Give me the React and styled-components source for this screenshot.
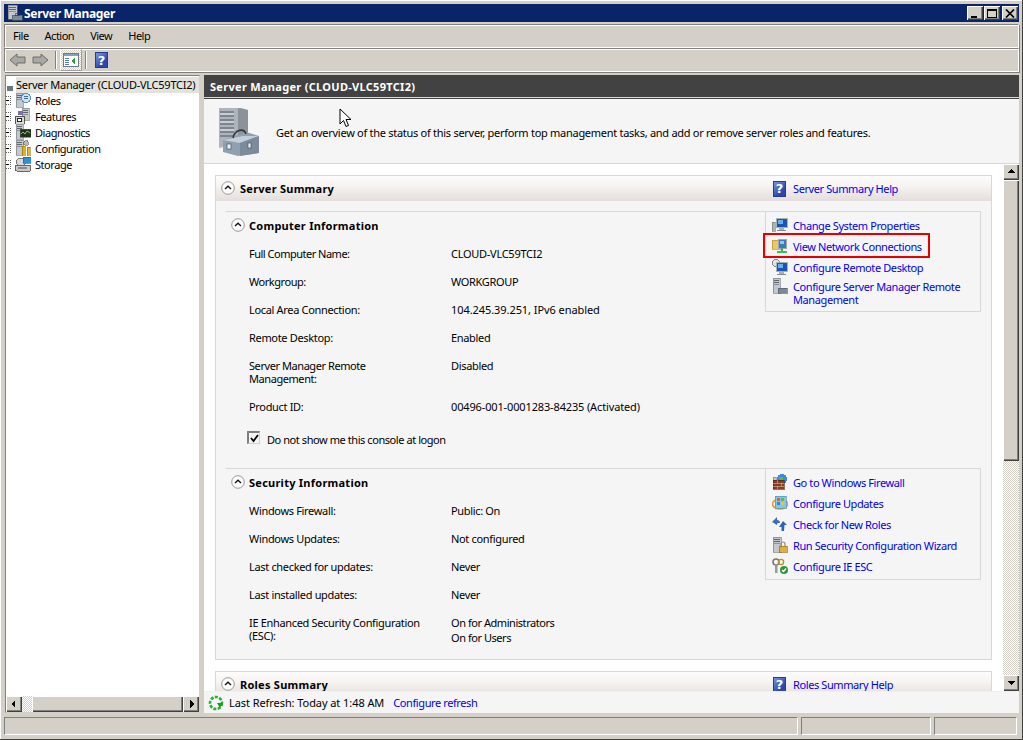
import React from 'react';
import styled, { createGlobalStyle } from 'styled-components';

const Global = createGlobalStyle`
  html, body { margin: 0; padding: 0; background: #d4d0c8; }
  body { font-family: "Noto Sans", "DejaVu Sans", sans-serif; font-size: 11px; line-height: 13px; color: #000; overflow: hidden; letter-spacing: -0.33px; }
  * { box-sizing: border-box; }
`;

const dither = `repeating-conic-gradient(#d4d0c8 0 25%, #fff 0 50%) 0 0 / 2px 2px`;
const raised = `box-shadow: inset 1px 1px 0 #fff, inset -1px -1px 0 #404040, inset -2px -2px 0 #808080;`;

const Window = styled.div`
  position: relative; width: 1023px; height: 740px; padding: 4px 4px 5px; background: #d4d0c8;
  box-shadow: inset -1px -1px 0 #404040, inset 1px 1px 0 #fff; display: flex; flex-direction: column;
`;
const TitleBar = styled.div`
  height: 18px; flex: none; background: #0a246a; display: flex; align-items: center; padding: 0 1px 0 3px; color: #fff;
`;
const TitleText = styled.span`font-weight: 700; font-size: 12px; margin-left: 1px; flex: 1; letter-spacing: -0.3px;`;
const WinButtons = styled.div`display: flex; gap: 1px; align-items: center;`;
const WinButton = styled.div`
  width: 16px; height: 14px; background: #d4d0c8; ${raised} display: flex; align-items: center; justify-content: center;
  margin-left: ${p => p.$gap || 0}px;
`;
const Bar = styled.div`
  height: 24px; flex: none; border: 1px solid #808080; border-right-color: #fff; border-bottom-color: #fff;
  box-shadow: inset 1px 1px 0 #fff, 1px 1px 0 #808080;
  display: flex; align-items: center;
`;
const MenuBar = styled(Bar)`margin-top: 2px; padding: 0 0 2px 8px; gap: 16px;`;
const MenuItem = styled.span`font-size: 11px; letter-spacing: -0.5px;`;
const ToolBar = styled(Bar)`padding-left: 4px;`;
const ToolSep = styled.div`width: 2px; height: 18px; border-left: 1px solid #808080; border-right: 1px solid #fff; margin: 0 ${p => p.$r || 4}px 0 ${p => p.$l || 4}px;`;
const ToolToggle = styled.div`
  width: 22px; height: 22px; background: ${dither}; border: 1px solid #fff; border-right-color: #a0a0a0; border-bottom-color: #a0a0a0;
  display: flex; align-items: center; justify-content: center;
`;
const Main = styled.div`flex: 1; min-height: 0; display: flex; margin-top: 3px; padding-left: 1px;`;
const TreePane = styled.div`
  width: 195px; flex: none; background: #fff; border: 1px solid #808080; border-bottom-color: #d4d0c8; border-right-color: #d4d0c8;
  display: flex; flex-direction: column; padding-top: 1px;
`;
const TreeList = styled.div`flex: 1; min-height: 0;`;
const TreeRootRow = styled.div`display: flex; align-items: center; height: 16px; position: relative;`;
const TreeRootLabel = styled.span`
  margin-left: 10px; background: #e4e2dc; height: 16px; padding-bottom: 2px; flex: 1; white-space: nowrap; display: flex; align-items: center; letter-spacing: -0.25px;
`;
const TreeRootIcon = styled.svg`position: absolute; left: 1px; top: 6px;`;
const TreeRow = styled.div`display: flex; align-items: center; height: 16px; padding-bottom: 2px; white-space: nowrap; letter-spacing: -0.45px;`;
const Expander = styled.div`width: 5px; height: 9px; border: 1px dotted #606060; border-left: none; margin-right: 4px; flex: none; background: linear-gradient(#000,#000) 0 3px / 3px 1px no-repeat;`;
const TreeIconSlot = styled.div`width: 16px; height: 16px; margin-right: 4px; flex: none;`;
const HScroll = styled.div`height: 16px; flex: none; display: flex; background: ${dither};`;
const ScrollBtn = styled.div`width: 16px; height: 16px; flex: none; background: #d4d0c8; ${raised} display: flex; align-items: center; justify-content: center;`;
const HThumb = styled.div`margin-left: 10px; flex: 1; background: #d4d0c8; ${raised}`;
const Splitter = styled.div`width: 4px; flex: none;`;
const RightPane = styled.div`flex: 1; min-width: 0; display: flex; flex-direction: column; background: #fff; box-shadow: inset 1px 0 0 #808080;`;
const PaneHeader = styled.div`
  height: 23px; flex: none; background: #424242; color: #fff; font-weight: 700; display: flex; align-items: center; padding-left: 6px;
  border-bottom: 1px solid #d8d8d8; font-size: 11px; letter-spacing: 0.3px;
`;
const Intro = styled.div`
  height: 66px; flex: none; background: #f5f5f5; border-top: 1px solid #424242; border-bottom: 1px solid #d8d8d8;
  display: flex; align-items: center; padding-left: 14px;
`;
const IntroText = styled.span`margin-left: 16px; padding-top: 2px; letter-spacing: -0.28px;`;
const ScrollZone = styled.div`flex: 1; min-height: 0; display: flex;`;
const Content = styled.div`flex: 1; min-width: 0; overflow: hidden; padding: 11px 11px 0; background: #fff;`;
const VScroll = styled.div`width: 16px; flex: none; display: flex; flex-direction: column; background: ${dither};`;
const VThumb = styled.div`height: 281px; flex: none; background: #d4d0c8; ${raised}`;
const VFill = styled.div`flex: 1;`;
const Section = styled.section`border: 1px solid #d8d8d8; background: #f5f5f5; margin-bottom: 11px;`;
const SectionHeader = styled.div`
  height: 25px; display: flex; align-items: center; padding-left: 5px;
  background: linear-gradient(#fdfcfc, #f6f3f1 40%, #e3dedb);
  > svg { margin-top: -2px; }
`;
const SectionTitle = styled.h2`margin: 0 0 0 ${p => p.$ml || 4}px; font-size: 11px; line-height: 13px; font-weight: 700; flex: 1; letter-spacing: 0.25px;`;
const HelpLink = styled.div`width: 218px; flex: none; display: flex; align-items: center;`;
const Link = styled.a`color: #0000ee; white-space: nowrap; margin-left: ${p => p.$ml || 0}px; letter-spacing: -0.4px;`;
const SectionBody = styled.div`padding: 10px 10px 9px;`;
const Group = styled.div`display: grid; grid-template-columns: 1fr 216px; align-items: start;`;
const InfoCol = styled.div`border-top: 1px solid #d8d8d8; height: ${p => p.$h}px;`;
const GroupHeader = styled.div`height: 26px; margin-bottom: 9px; display: flex; align-items: center; padding-left: 5px;`;
const InfoRow = styled.div`display: grid; grid-template-columns: 202px 1fr; padding: 0 0 15px 23px;`;
const InfoKey = styled.div`letter-spacing: ${p => p.$ls ?? -0.33}px;`;
const InfoValue = styled.div`letter-spacing: ${p => p.$ls ?? -0.33}px;`;
const CheckRow = styled.label`display: flex; align-items: center; padding: 5px 0 0 21px; letter-spacing: -0.43px;`;
const CheckBox = styled.span`
  width: 13px; height: 13px; flex: none; background: #f5f5f5; border: 2px solid #808080; border-right: 1px solid #d4d0c8; border-bottom: 1px solid #d4d0c8;
  display: flex; align-items: center; justify-content: center; margin-right: 7px; position: relative; top: -2px;
`;
const TaskBox = styled.div`border: 1px solid #d8d8d8; padding: 3px 0 2px;`;
const TaskRow = styled.div`
  display: flex; align-items: flex-start; padding: ${p => (p.$tight ? '2px 0 3px 6px' : '4px 0 4px 6px')}; position: relative;
`;
const TaskIcon = styled.div`width: 16px; height: 13px; flex: none; margin: -2px 5px 0 0;`;
const TaskLink = styled.a`color: #0000ee; line-height: 13px; width: 185px; letter-spacing: -0.4px;`;
const Highlight = styled.div`position: absolute; left: -3px; top: -3px; width: 167px; height: 25px; border: 2px solid #e80000; pointer-events: none;`;
const RefreshBar = styled.div`height: 22px; flex: none; background: #f5f5f5; display: flex; align-items: center; padding-left: 4px; border-top: 1px solid #f0f0f0; position: relative;`;
const RefreshText = styled.span`margin-left: 5px; letter-spacing: -0.07px;`;
const StatusBar = styled.div`height: 18px; flex: none; margin-top: 4px; display: flex; gap: 3px; padding-right: 2px;`;
const StatusCell = styled.div`
  flex: ${p => (p.$w ? `0 0 ${p.$w}px` : 1)}; border: 1px solid #808080; border-right-color: #fff; border-bottom-color: #fff;
`;
const Cursor = styled.svg`position: absolute; left: 339px; top: 108px; pointer-events: none;`;
const TwoLine = styled.span`display: inline-block; margin-top: 2px;`;
const HelpBox = styled.span`
  width: 13px; height: 16px; flex: none; display: flex; align-items: center; justify-content: center;
  background: linear-gradient(135deg, #7a96dc, #2a48b0 70%); border: 1px solid #27399a; color: #fff; font: 700 13px/13px "DejaVu Sans", sans-serif; letter-spacing: 0;
`;
const ToolPane = styled.div`margin-right: ${p => p.$r || 0}px;`;

const Sv = ({ children, s = 16, v = 16 }) => (
  <svg width={s} height={s} viewBox={`0 0 ${v} ${v}`} shapeRendering="crispEdges" style={{ display: 'block' }}>{children}</svg>
);

const Tower = ({ x = 1, y = 0, w = 7, h = 14, c = '#c4c8cc' }) => (
  <g>
    <rect x={x} y={y} width={w} height={h} fill={c} stroke="#70757a" strokeWidth="0.6" />
    <rect x={x + 1} y={y + 2} width={w - 2} height="1" fill="#60666c" />
    <rect x={x + 1} y={y + 4} width={w - 2} height="1" fill="#60666c" />
    <rect x={x + 1} y={y + 6} width={w - 2} height="1" fill="#8a9096" />
  </g>
);

const ServerCase = () => (
  <Sv><Tower x={1} y={0} w={9} h={14} /><rect x={5} y={10} width={10} height={5} fill="#7c8a98" stroke="#4a5560" strokeWidth="0.6" /><rect x={8} y={8.5} width={4} height={1.5} fill="none" stroke="#333" strokeWidth="0.6" /></Sv>
);
const RolesIcon = () => (
  <Sv><Tower x={1} y={1} w={7} h={14} /><ellipse cx={11} cy={6} rx={4.5} ry={4.5} fill="#cfe4f7" stroke="#5b8fc8" /><rect x={9} y={4} width={4} height={1} fill="#3a6ea8" /><rect x={9} y={6} width={4} height={1} fill="#3a6ea8" /></Sv>
);
const FeaturesIcon = () => (
  <Sv><Tower x={7} y={0} w={7} h={12} /><rect x={3} y={3} width={5} height={4} fill="#7d6fb0" /><rect x={0} y={8} width={9} height={8} fill="#d8d8d0" stroke="#333" strokeWidth="0.8" /><circle cx={4.5} cy={12} r={2} fill="#fff" stroke="#222" /></Sv>
);
const DiagIcon = () => (
  <Sv><Tower x={1} y={0} w={7} h={15} /><rect x={5} y={5} width={11} height={8} fill="#26301f" stroke="#555" strokeWidth="0.6" /><path d="M6 10 L8 8 L10 10 L12 7 L15 9" fill="none" stroke="#7ed048" strokeWidth="1" shapeRendering="auto" /></Sv>
);
const ConfigIcon = () => (
  <Sv><Tower x={1} y={0} w={7} h={15} /><circle cx={11} cy={3} r={2.5} fill="#b8b8b8" stroke="#555" strokeWidth="0.6" /><rect x={7} y={6} width={3} height={10} fill="#e0b020" stroke="#7a5a08" strokeWidth="0.5" /><rect x={12} y={7} width={3} height={9} fill="#e8b818" stroke="#7a5a08" strokeWidth="0.5" /></Sv>
);
const StorageIcon = () => (
  <Sv><ellipse cx={6} cy={6} rx={5} ry={4} fill="#d8d8d8" stroke="#777" /><rect x={8} y={1} width={8} height={6} fill="#2b8fd8" stroke="#1c5a90" strokeWidth="0.6" /><rect x={0.5} y={9} width={15} height={6} rx={1} fill="#c8c8c8" stroke="#666" /><rect x={3} y={11} width={9} height={2} fill="#8c8c8c" /></Sv>
);
const Monitor = ({ x = 4, y = 1 }) => (
  <g><rect x={x} y={y} width={11} height={9} fill="#1b55b0" stroke="#a8b0b8" /><rect x={x + 2} y={y + 2} width={5} height={4} fill="#66b0ee" /><rect x={x + 3} y={y + 10} width={5} height={2} fill="#aab0b8" /><rect x={x + 1} y={y + 12} width={9} height={1} fill="#808890" /></g>
);
const SysIcon = () => <Sv><rect x={0} y={5} width={3} height={9} fill="#b0b4b0" stroke="#666" strokeWidth="0.5" /><Monitor x={4} y={1} /></Sv>;
const NetIcon = () => (
  <Sv><rect x={0} y={2} width={10} height={9} fill="#ecc860" stroke="#b08a28" strokeWidth="0.6" /><rect x={6} y={1} width={8} height={9} fill="#3f78c0" stroke="#a0a8b0" /><rect x={8} y={3} width={4} height={3} fill="#90c8f0" /><rect x={9} y={10} width={2} height={3} fill="#40b050" /><rect x={5} y={13} width={10} height={2} fill="#40c060" /></Sv>
);
const RemoteIcon = () => <Sv><circle cx={4} cy={4} r={3.5} fill="#dfe4e8" stroke="#888" /><Monitor x={4} y={3} /></Sv>;
const FirewallIcon = () => (
  <Sv><circle cx={10} cy={5} r={5} fill="#3a8cdc" /><path d="M7 3h4v3H8z" fill="#58b848" /><rect x={1} y={3} width={3} height={3} fill="#c8c8c8" stroke="#666" strokeWidth="0.5" /><rect x={1} y={6} width={11} height={9} fill="#8a3b22" stroke="#4a1c10" strokeWidth="0.6" /><path d="M1 9h11M1 12h11M5 6v3M9 9v3M5 12v3" stroke="#e0b8a0" strokeWidth="0.6" /></Sv>
);
const UpdatesIcon = () => (
  <Sv><ellipse cx={8} cy={9} rx={7.5} ry={5} fill="none" stroke="#f09828" strokeWidth="1.6" shapeRendering="auto" /><rect x={3} y={1} width={11} height={12} fill="#80c8e8" stroke="#3a90c8" strokeWidth="0.6" /><rect x={5} y={3} width={3} height={3} fill="#e86030" /><rect x={9} y={3} width={3} height={3} fill="#60b848" /><rect x={5} y={7} width={3} height={3} fill="#3a80d8" /><rect x={9} y={7} width={3} height={3} fill="#f0c030" /></Sv>
);
const RolesCheckIcon = () => (
  <svg width="16" height="16" viewBox="0 0 16 16" style={{ display: 'block' }}>
    <path d="M0 6 L5 1 L5 4 C7 4 8 5 8 7 L5.5 7 L5 9 Z" fill="#3a6ec0" />
    <path d="M7 11 L11 5 L15 9 L12.5 9 L12 15 L9.5 15 L9.5 11 Z" fill="#2c64b4" />
  </svg>
);
const SecWizardIcon = () => (
  <Sv><Tower x={1} y={0} w={8} h={15} /><rect x={7} y={9} width={8} height={6} fill="#e0b040" stroke="#8a6410" strokeWidth="0.6" /><path d="M9 9V7a2 2 0 0 1 4 0v2" fill="none" stroke="#888" strokeWidth="1.2" shapeRendering="auto" /></Sv>
);
const EscIcon = () => (
  <svg width="16" height="16" viewBox="0 0 16 16" style={{ display: 'block' }}>
    <circle cx="4" cy="4" r="3" fill="none" stroke="#777" strokeWidth="1.6" />
    <rect x="3" y="6" width="2.5" height="9" fill="#999" />
    <circle cx="9" cy="4" r="2.6" fill="none" stroke="#b89020" strokeWidth="1.3" />
    <circle cx="12" cy="12" r="4" fill="#2c9a3c" />
    <path d="M10 12 L11.5 13.5 L14 10.5" fill="none" stroke="#fff" strokeWidth="1.2" />
  </svg>
);
const ToolCase = () => (
  <svg width="16" height="16" viewBox="0 0 16 16" shapeRendering="crispEdges" style={{ display: 'block' }}>
    <Tower x={1} y={0} w={7} h={15} /><rect x={6} y={10} width={9} height={5} fill="#7c8a98" stroke="#4a5560" strokeWidth="0.6" />
  </svg>
);
const BigServer = () => (
  <svg width="42" height="50" viewBox="0 0 42 50" style={{ display: 'block' }}>
    <path d="M1 2 L24 2 L30 4 L30 36 L1 42 Z" fill="#aeb4bc" />
    <path d="M20 2 L30 4 L30 36 L20 38 Z" fill="#8b929a" />
    <path d="M2 6h14M2 10h14M2 14h14M2 18h14M2 22h14M2 26h14M2 30h14" stroke="#6f757c" strokeWidth="1.3" />
    <path d="M2 8h14M2 16h14M2 24h14" stroke="#e4e7ea" strokeWidth="1" />
    <path d="M5 34 L28 26 L41 30 L41 47 L20 50 L5 46 Z" fill="#8fa0b0" />
    <path d="M5 34 L25 30 L41 30 L22 37 Z" fill="#c3ced8" />
    <path d="M22 37 L41 30 L41 47 L22 50 Z" fill="#7b8b9c" />
    <path d="M15 32 C17 23 26 22 28 28" fill="none" stroke="#33383e" strokeWidth="1.6" />
    <rect x="9" y="38" width="4" height="5" fill="#e8edf2" stroke="#3e464e" strokeWidth="0.6" />
    <rect x="30" y="37" width="3" height="5" fill="#e8edf2" stroke="#3e464e" strokeWidth="0.6" />
  </svg>
);

const Collapse = () => (
  <svg width="14" height="14" viewBox="0 0 14 14" style={{ display: 'block', flex: 'none' }}>
    <circle cx="7" cy="7" r="6.3" fill="#fbfbfb" stroke="#8e8e8e" strokeWidth="0.9" />
    <path d="M4 8 L7 5.2 L10 8" fill="none" stroke="#111" strokeWidth="1.3" />
  </svg>
);
const HelpIcon = () => <HelpBox>?</HelpBox>;
const Arrow = ({ d }) => {
  const pts = { u: '4,9 8,5 12,9', d: '4,6 12,6 8,10', l: '9,4 9,12 5,8', r: '7,4 7,12 11,8' }[d];
  return <svg width="16" height="16" viewBox="0 0 16 16" style={{ display: 'block' }} shapeRendering="crispEdges"><polygon points={pts} fill="#000" /></svg>;
};
const ToolArrow = ({ flip }) => (
  <svg width="17" height="16" viewBox="0 0 17 16" style={{ display: 'block', transform: flip ? 'scaleX(-1)' : 'none' }}>
    <path d="M1 8 L8 2 L8 5 L16 5 L16 11 L8 11 L8 14 Z" fill="#a8a8a4" stroke="#6c6c68" strokeWidth="1" />
  </svg>
);

const tree = [
  ['Roles', RolesIcon], ['Features', FeaturesIcon], ['Diagnostics', DiagIcon], ['Configuration', ConfigIcon], ['Storage', StorageIcon],
];
const compInfo = [
  ['Full Computer Name:', 'CLOUD-VLC59TCI2', -0.27, -0.5],
  ['Workgroup:', 'WORKGROUP', -0.33, -0.45],
  ['Local Area Connection:', '104.245.39.251, IPv6 enabled', -0.07],
  ['Remote Desktop:', 'Enabled'],
  [<>Server Manager Remote<br />Management:</>, 'Disabled', -0.33, -0.43],
  ['Product ID:', '00496-001-0001283-84235 (Activated)', -0.14],
];
const secInfo = [
  ['Windows Firewall:', 'Public: On'],
  ['Windows Updates:', 'Not configured'],
  ['Last checked for updates:', 'Never'],
  ['Last installed updates:', 'Never'],
  [<>IE Enhanced Security Configuration<br />(ESC):</>, <>On for Administrators<br /><TwoLine>On for Users</TwoLine></>, -0.45],
];
const compTasks = [
  ['Change System Properties', SysIcon],
  ['View Network Connections', NetIcon, true],
  ['Configure Remote Desktop', RemoteIcon],
  ['Configure Server Manager Remote Management', ToolCase, false, true],
];
const secTasks = [
  ['Go to Windows Firewall', FirewallIcon],
  ['Configure Updates', UpdatesIcon],
  ['Check for New Roles', RolesCheckIcon],
  ['Run Security Configuration Wizard', SecWizardIcon],
  ['Configure IE ESC', EscIcon],
];

const Tasks = ({ items }) => (
  <TaskBox>
    {items.map(([label, Icon, hi, tight]) => (
      <TaskRow key={label} $tight={tight}>
        {hi && <Highlight />}
        <TaskIcon><Icon /></TaskIcon>
        <TaskLink>{label}</TaskLink>
      </TaskRow>
    ))}
  </TaskBox>
);
const Info = ({ rows }) => rows.map(([k, v, ls, kls], i) => (
  <InfoRow key={i}><InfoKey $ls={kls}>{k}</InfoKey><InfoValue $ls={ls}>{v}</InfoValue></InfoRow>
));

export default function App() {
  return (
    <Window>
      <Global />
      <TitleBar>
        <ServerCase />
        <TitleText>Server Manager</TitleText>
        <WinButtons>
          <WinButton><svg width="10" height="9" viewBox="0 0 10 9" shapeRendering="crispEdges"><rect x="1" y="7" width="6" height="2" fill="#000" /></svg></WinButton>
          <WinButton><svg width="10" height="9" viewBox="0 0 10 9" shapeRendering="crispEdges"><path d="M0.5 1.5h9v7h-9z" fill="none" stroke="#000" /><rect y="0" width="10" height="2" fill="#000" /></svg></WinButton>
          <WinButton $gap={1}><svg width="10" height="9" viewBox="0 0 10 9"><path d="M1 0.5 L9 8.5 M9 0.5 L1 8.5" stroke="#000" strokeWidth="1.7" /></svg></WinButton>
        </WinButtons>
      </TitleBar>
      <MenuBar>
        <MenuItem>File</MenuItem><MenuItem>Action</MenuItem><MenuItem>View</MenuItem><MenuItem>Help</MenuItem>
      </MenuBar>
      <ToolBar>
        <ToolPane $r={6}><ToolArrow /></ToolPane>
        <ToolPane><ToolArrow flip /></ToolPane>
        <ToolSep $l={6} $r={3} />
        <ToolToggle>
          <svg width="16" height="14" viewBox="0 0 16 14" shapeRendering="crispEdges"><rect x="0.5" y="0.5" width="15" height="13" fill="#fff" stroke="#6a7a90" /><rect x="1" y="1" width="14" height="2" fill="#8aa0c0" /><path d="M2 5h4v1H2zM2 7h4v1H2zM2 9h4v1H2zM2 11h4v1H2z" fill="#5c78a8" /><polygon points="12,5 12,11 8,8" fill="#30a030" /></svg>
        </ToolToggle>
        <ToolSep $l={3} $r={8} />
        <HelpIcon />
      </ToolBar>
      <Main>
        <TreePane>
          <TreeList>
            <TreeRootRow>
              <TreeRootIcon width="7" height="9" viewBox="0 0 7 9"><rect x="0" y="3" width="6" height="5" fill="#6a7884" /></TreeRootIcon>
              <TreeRootLabel>Server Manager (CLOUD-VLC59TCI2)</TreeRootLabel>
            </TreeRootRow>
            {tree.map(([label, Icon]) => (
              <TreeRow key={label}><Expander /><TreeIconSlot><Icon /></TreeIconSlot>{label}</TreeRow>
            ))}
          </TreeList>
          <HScroll>
            <ScrollBtn><Arrow d="l" /></ScrollBtn>
            <HThumb />
            <ScrollBtn><Arrow d="r" /></ScrollBtn>
          </HScroll>
        </TreePane>
        <Splitter />
        <RightPane>
          <PaneHeader>Server Manager (CLOUD-VLC59TCI2)</PaneHeader>
          <Intro>
            <BigServer />
            <IntroText>Get an overview of the status of this server, perform top management tasks, and add or remove server roles and features.</IntroText>
          </Intro>
          <ScrollZone>
            <Content>
              <Section>
                <SectionHeader>
                  <Collapse /><SectionTitle $ml={5}>Server Summary</SectionTitle>
                  <HelpLink><HelpIcon /><Link $ml={7}>Server Summary Help</Link></HelpLink>
                </SectionHeader>
                <SectionBody>
                  <Group>
                    <InfoCol $h={257}>
                      <GroupHeader><Collapse /><SectionTitle>Computer Information</SectionTitle></GroupHeader>
                      <Info rows={compInfo} />
                      <CheckRow>
                        <CheckBox><svg width="9" height="9" viewBox="0 0 9 9"><path d="M1 4 L3.5 7 L8 1" fill="none" stroke="#000" strokeWidth="1.8" /></svg></CheckBox>
                        Do not show me this console at logon
                      </CheckRow>
                    </InfoCol>
                    <Tasks items={compTasks} />
                  </Group>
                  <Group>
                    <InfoCol $h={182}>
                      <GroupHeader><Collapse /><SectionTitle>Security Information</SectionTitle></GroupHeader>
                      <Info rows={secInfo} />
                    </InfoCol>
                    <Tasks items={secTasks} />
                  </Group>
                </SectionBody>
              </Section>
              <Section>
                <SectionHeader>
                  <Collapse /><SectionTitle $ml={5}>Roles Summary</SectionTitle>
                  <HelpLink><HelpIcon /><Link $ml={7}>Roles Summary Help</Link></HelpLink>
                </SectionHeader>
              </Section>
            </Content>
            <VScroll>
              <ScrollBtn><Arrow d="u" /></ScrollBtn>
              <VThumb />
              <VFill />
              <ScrollBtn><Arrow d="d" /></ScrollBtn>
            </VScroll>
          </ScrollZone>
          <RefreshBar>
            <svg width="16" height="16" viewBox="0 0 16 16"><circle cx="8" cy="8" r="6" fill="none" stroke="#2fae2f" strokeWidth="2.6" strokeDasharray="3 1.4" /><path d="M9 8 L15 8 L12 13 Z" fill="#1a9a1a" /></svg>
            <RefreshText>Last Refresh: Today at 1:48 AM</RefreshText>
            <Link $ml={9}>Configure refresh</Link>
          </RefreshBar>
        </RightPane>
      </Main>
      <StatusBar>
        <StatusCell /><StatusCell $w={130} /><StatusCell $w={83} />
      </StatusBar>
      <Cursor width="13" height="20" viewBox="0 0 13 20"><path d="M1 1 L1 16 L4.5 12.5 L7 18.5 L9.5 17.5 L7 11.5 L12 11.5 Z" fill="#fff" stroke="#000" strokeWidth="1" /></Cursor>
    </Window>
  );
}
